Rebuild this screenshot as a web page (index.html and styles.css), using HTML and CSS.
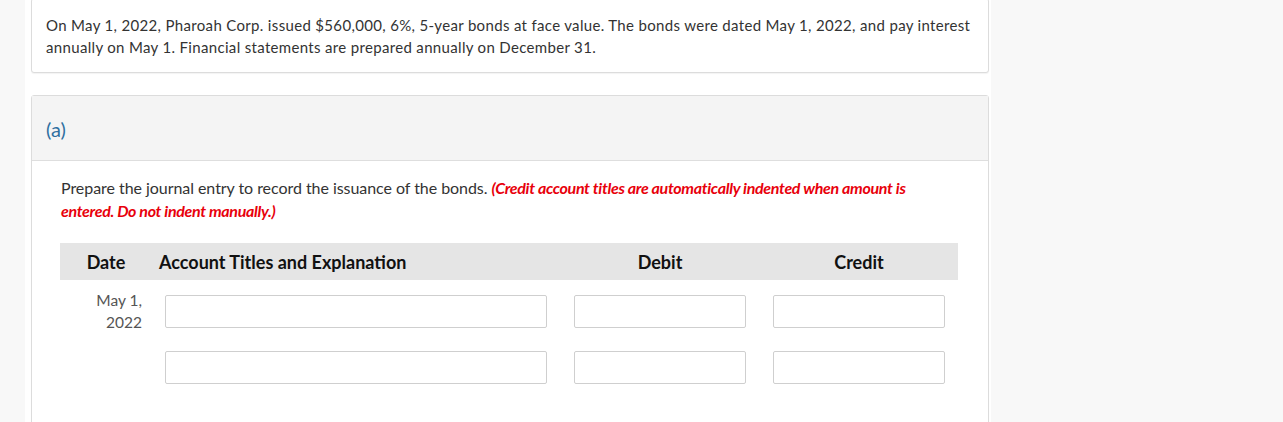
FILE: index.html
```html
<!DOCTYPE html>
<html>
<head>
<meta charset="utf-8">
<link rel="stylesheet" href="styles.css">
</head>
<body>
<div class="page">
  <div class="card intro">
    <p>On May 1, 2022, Pharoah Corp. issued $560,000, 6%, 5-year bonds at face value. The bonds were dated May 1, 2022, and pay interest annually on May 1. Financial statements are prepared annually on December 31.</p>
  </div>
  <div class="card part">
    <div class="part-head">(a)</div>
    <div class="part-body">
      <p class="prompt">Prepare the journal entry to record the issuance of the bonds. <em class="note">(Credit account titles are automatically indented when amount is entered. Do not indent manually.)</em></p>
      <div class="journal">
        <div class="jhead">
          <div class="h-date">Date</div>
          <div class="h-acct">Account Titles and Explanation</div>
          <div class="h-num">Debit</div>
          <div class="h-num">Credit</div>
        </div>
        <div class="jrow">
          <div class="c-date">May 1,<br>2022</div>
          <div class="c-acct"><input class="field" type="text"></div>
          <div class="c-num"><input class="field" type="text"></div>
          <div class="c-num"><input class="field" type="text"></div>
        </div>
        <div class="jrow">
          <div class="c-date"></div>
          <div class="c-acct"><input class="field" type="text"></div>
          <div class="c-num"><input class="field" type="text"></div>
          <div class="c-num"><input class="field" type="text"></div>
        </div>
      </div>
    </div>
  </div>
</div>
</body>
</html>
```

FILE: styles.css
```css
html, body {
  margin: 0;
  padding: 0;
  background: #f8f8f8;
  font-family: Lato, "Open Sans", sans-serif;
  color: #333;
}
.page {
  width: 958px;
  margin-left: 25px;
  margin-top: -2px;
  padding: 0 2px 0 6px;
  background: #fff;
  height: 440px;
}
.card {
  border: 1px solid #dcdcdc;
  border-radius: 3px;
  background: #fff;
  box-shadow: 0 1px 1px rgba(0,0,0,0.05);
}
.intro {
  padding: 15px 14px 14px 14px;
}
.intro p {
  margin: 0;
  font-size: 15px;
  line-height: 22px;
  letter-spacing: 0.33px;
}
.part {
  margin-top: 22px;
}
.part-head {
  background: #f4f4f4;
  border-bottom: 1px solid #dedede;
  padding-left: 14px;
  display: flex;
  align-items: center;
  font-size: 20px;
  color: #2f6fa0;
  box-sizing: border-box;
  height: 65px;
  padding-top: 2px;
}
.part-body {
  padding: 15px 30px 40px 28px;
}
.prompt {
  margin: 0 0 21px 1px;
  font-size: 16px;
  line-height: 23px;
  color: #333;
  letter-spacing: -0.05px;
}
.note {
  color: #e8000b;
  font-weight: bold;
  font-style: italic;
  letter-spacing: -0.32px;
}
.journal {
  width: 898px;
}
.jhead, .jrow {
  display: grid;
  grid-template-columns: 92px 408px 200px 198px;
}
.jhead {
  background: #e5e5e5;
  height: 37px;
  align-items: center;
  font-weight: bold;
  font-size: 18px;
  color: #111;
}
.h-date { text-align: center; }
.h-acct { padding-left: 7px; }
.h-num { text-align: center; }
.jrow {
  height: 56px;
  align-items: start;
}
.jhead + .jrow { margin-top: 15px; }
.c-date {
  text-align: right;
  padding-right: 10px;
  font-size: 15.5px;
  line-height: 22px;
  color: #555;
  margin-top: -6px;
}
.c-acct, .c-num {
  padding: 0 13px;
}
.c-num:nth-child(3) { padding: 0 14px; }
.field {
  display: block;
  box-sizing: border-box;
  width: 100%;
  height: 33px;
  border: 1px solid #cfcfcf;
  border-radius: 2px;
  background: #fff;
  margin: 0;
  padding: 0 6px;
  font-family: Lato, sans-serif;
}
```
